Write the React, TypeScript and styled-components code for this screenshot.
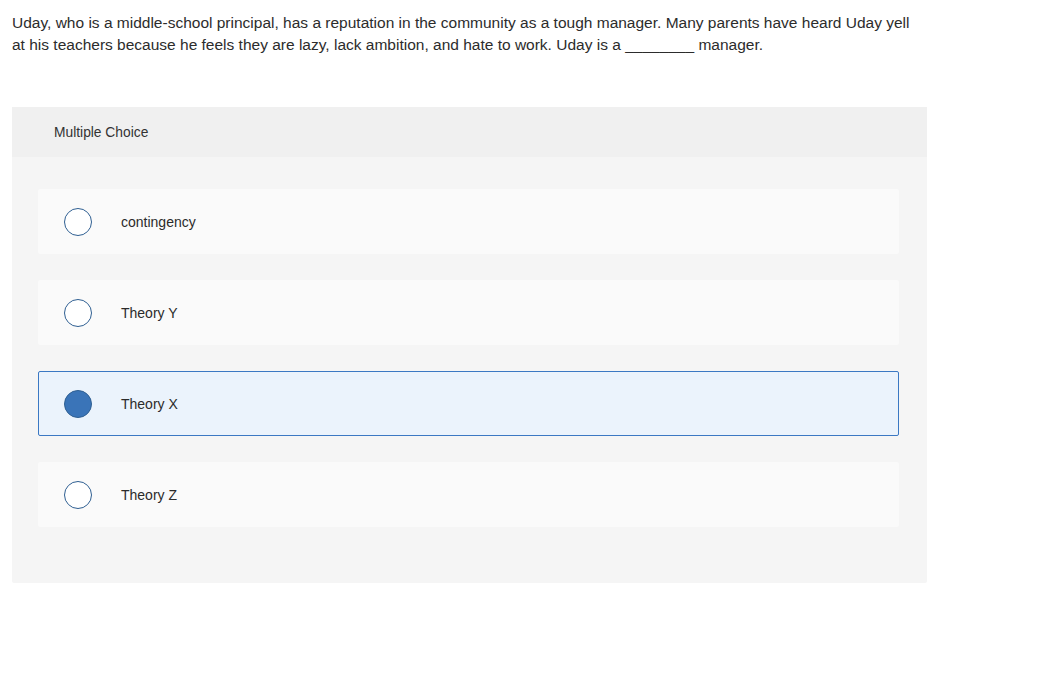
import styled, { createGlobalStyle } from "styled-components";

const GlobalStyle = createGlobalStyle`
  body {
    margin: 0;
    background: #ffffff;
    font-family: "Liberation Sans", Arial, sans-serif;
    color: #2b2b2b;
  }
`;

const Page = styled.div`
  padding: 12px 12px 0 12px;
  width: 915px;
`;

const Prompt = styled.p`
  margin: 0;
  width: 912px;
  font-size: 15.5px;
  line-height: 22px;
  color: #2c2c2c;
`;

const Panel = styled.section`
  margin-top: 51px;
  background: #f5f5f5;
  border-radius: 2px;
  padding-bottom: 56px;
`;

const PanelHeader = styled.div`
  height: 50px;
  display: flex;
  align-items: center;
  padding-left: 42px;
  background: #f0f0f0;
  font-size: 13.8px;
  color: #333;
`;

const Options = styled.div`
  display: flex;
  flex-direction: column;
  gap: 26px;
  padding: 32px 28px 0 26px;
`;

const Option = styled.label<{ $selected?: boolean }>`
  box-sizing: border-box;
  height: 65px;
  display: flex;
  align-items: center;
  gap: 29px;
  padding-left: 25px;
  border-radius: 2px;
  background: ${(p) => (p.$selected ? "#ebf3fc" : "#fafafa")};
  border: 1px solid ${(p) => (p.$selected ? "#3b78c3" : "transparent")};
  font-size: 14px;
  color: #2b2b2b;
  cursor: pointer;
`;

const Radio = styled.span<{ $selected?: boolean }>`
  box-sizing: border-box;
  width: 28px;
  height: 28px;
  border-radius: 50%;
  flex: none;
  border: 1.5px solid #2f5f92;
  background: ${(p) => (p.$selected ? "#3a74b8" : "#ffffff")};
`;

const choices = ["contingency", "Theory Y", "Theory X", "Theory Z"];
const picked = "Theory X";

export default function App() {
  return (
    <>
      <GlobalStyle />
      <Page>
        <Prompt>
          Uday, who is a middle-school principal, has a reputation in the
          community as a tough manager. Many parents have heard Uday yell at
          his teachers because he feels they are lazy, lack ambition, and hate
          to work. Uday is a ________ manager.
        </Prompt>
        <Panel>
          <PanelHeader>Multiple Choice</PanelHeader>
          <Options>
            {choices.map((c) => (
              <Option key={c} $selected={c === picked}>
                <Radio $selected={c === picked} />
                {c}
              </Option>
            ))}
          </Options>
        </Panel>
      </Page>
    </>
  );
}
